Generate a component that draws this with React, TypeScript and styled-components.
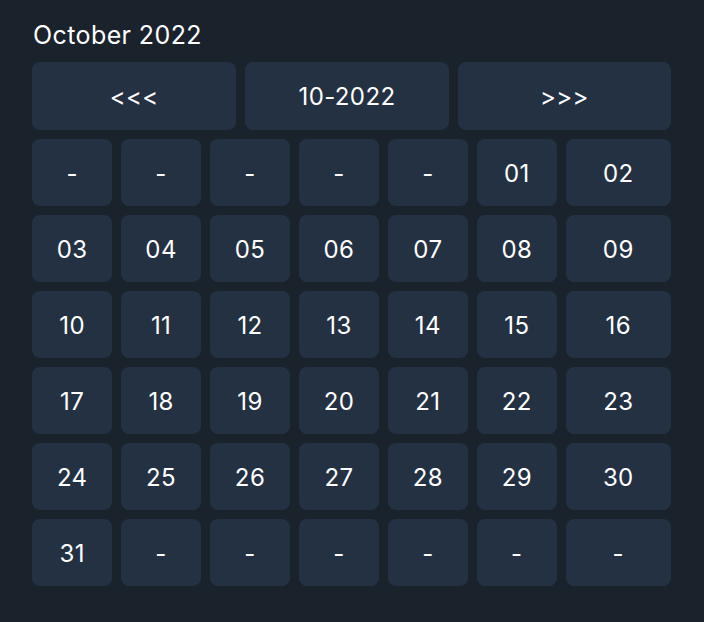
import React from "react";
import styled, { createGlobalStyle } from "styled-components";

const Global = createGlobalStyle`
  html, body { margin: 0; padding: 0; background: #1a222c; }
  body { font-family: Inter, "Noto Sans", sans-serif; color: #ffffff; }
`;

const Page = styled.div`
  padding: 21px 33px 36px 32px;
  display: flex;
  flex-direction: column;
`;

const Title = styled.h1`
  margin: 0 0 13px 1px;
  font-size: 25px;
  line-height: 28px;
  font-weight: 400;
  letter-spacing: 0.4px;
  color: #ffffff;
`;

const Grid = styled.div<{ $cols: string }>`
  display: grid;
  grid-template-columns: ${(p) => p.$cols};
  grid-auto-rows: 67.5px;
  gap: 8.6px;
  margin-bottom: 9px;
`;

const Cell = styled.button`
  border: none;
  border-radius: 8px;
  background: #243142;
  color: #ffffff;
  font-family: Inter, "Noto Sans", sans-serif;
  font-size: 24px;
  font-weight: 400;
  letter-spacing: 0.4px;
  display: flex;
  align-items: center;
  justify-content: center;
  padding: 2px 0 0;
`;

const days: string[] = [
  "-", "-", "-", "-", "-", "01", "02",
  "03", "04", "05", "06", "07", "08", "09",
  "10", "11", "12", "13", "14", "15", "16",
  "17", "18", "19", "20", "21", "22", "23",
  "24", "25", "26", "27", "28", "29", "30",
  "31", "-", "-", "-", "-", "-", "-",
];

export default function App() {
  return (
    <>
      <Global />
      <Page>
        <Title>October 2022</Title>
        <Grid $cols="204fr 204fr 213fr">
          <Cell>&lt;&lt;&lt;</Cell>
          <Cell>10-2022</Cell>
          <Cell>&gt;&gt;&gt;</Cell>
        </Grid>
        <Grid $cols="repeat(6, 80fr) 105fr">
          {days.map((d, i) => (
            <Cell key={i}>{d}</Cell>
          ))}
        </Grid>
      </Page>
    </>
  );
}
